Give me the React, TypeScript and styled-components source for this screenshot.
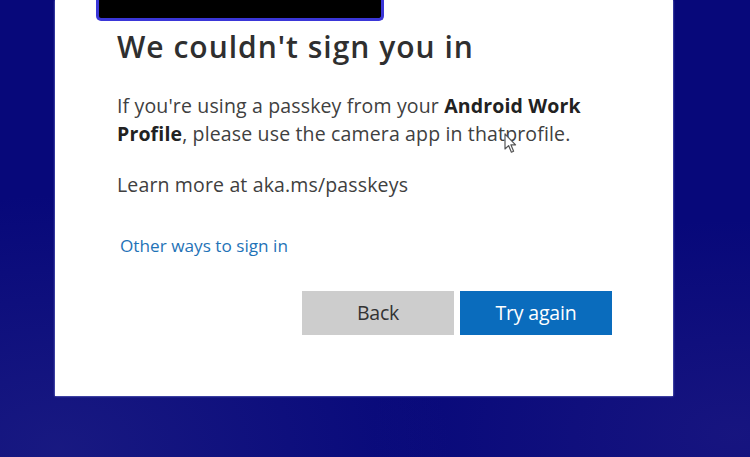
import styled, { createGlobalStyle } from "styled-components";

const GlobalStyle = createGlobalStyle`
	html, body {
		margin: 0;
		padding: 0;
	}
	body {
		font-family: "Open Sans", "Noto Sans", sans-serif;
	}
`;

const App = () => {
	return (
		<>
			<GlobalStyle />
			<Screen>
				<Card>
					<HeaderBox />
					<Title>We couldn't sign you in</Title>
					<Message>
						If you're using a passkey from your <strong>Android Work Profile</strong>, please use the camera app in that
						<CursorAnchor>
							<Pointer />
						</CursorAnchor>
						profile.
					</Message>
					<Message>Learn more at aka.ms/passkeys</Message>
					<OtherWays href="#">Other ways to sign in</OtherWays>
					<Actions>
						<Button>Back</Button>
						<Button $primary>Try again</Button>
					</Actions>
				</Card>
			</Screen>
		</>
	);
};

export default App;

const Pointer = () => (
	<svg width="13" height="21" viewBox="0 0 13 21">
		<path
			d="M1 1 L1 16 L4.6 12.6 L7.4 19.2 L9.6 18.2 L6.9 11.8 L11.6 11.8 Z"
			fill="#fff"
			stroke="#555"
			strokeWidth="1.2"
			strokeLinejoin="round"
		/>
	</svg>
);

const Screen = styled.div`
	width: 750px;
	height: 457px;
	overflow: hidden;
	background:
		radial-gradient(ellipse at 8% 98%, rgba(50, 50, 140, 0.4), transparent 40%),
		radial-gradient(ellipse at 98% 95%, rgba(60, 50, 140, 0.3), transparent 35%),
		#07087a;
`;

const Card = styled.div`
	margin-left: 55px;
	width: 618px;
	height: 396px;
	box-sizing: border-box;
	background: #fff;
	padding: 0 61px 0 62px;
	display: flex;
	flex-direction: column;
	box-shadow: 0 0 2px rgba(180, 190, 255, 0.8);
`;

const HeaderBox = styled.div`
	margin-left: -21px;
	width: 282px;
	height: 18px;
	background: #000;
	border: 3px solid #3a36d8;
	border-top: none;
	border-radius: 0 0 5px 5px;
`;

const Title = styled.h1`
	margin: 7px 0 0;
	font-size: 30px;
	font-weight: 600;
	line-height: 38px;
	color: #2f2f2f;
	letter-spacing: 1px;
`;

const Message = styled.p`
	margin: 26px 0 0;
	font-size: 19.5px;
	line-height: 28px;
	color: #404040;
	letter-spacing: 0.15px;

	strong {
		font-weight: 700;
		color: #222;
	}

	& + & {
		margin-top: 23px;
	}
`;

const CursorAnchor = styled.span`
	position: relative;
	display: inline-block;
	width: 0;

	svg {
		position: absolute;
		left: -1px;
		top: -8px;
	}
`;

const OtherWays = styled.a`
	margin: 36px 0 0 3px;
	font-size: 17.2px;
	line-height: 22px;
	color: #1f73b7;
	text-decoration: none;
	align-self: flex-start;
`;

const Actions = styled.div`
	display: flex;
	justify-content: flex-end;
	gap: 6px;
	margin-top: 33.5px;
`;

const Button = styled.button<{ $primary?: boolean }>`
	width: 152px;
	height: 44px;
	border: none;
	font-family: "Open Sans", "Noto Sans", sans-serif;
	font-size: 19.5px;
	letter-spacing: -0.2px;
	background: ${(p) => (p.$primary ? "#0a6cbd" : "#cdcdcd")};
	color: ${(p) => (p.$primary ? "#fff" : "#333")};
	cursor: pointer;
`;
